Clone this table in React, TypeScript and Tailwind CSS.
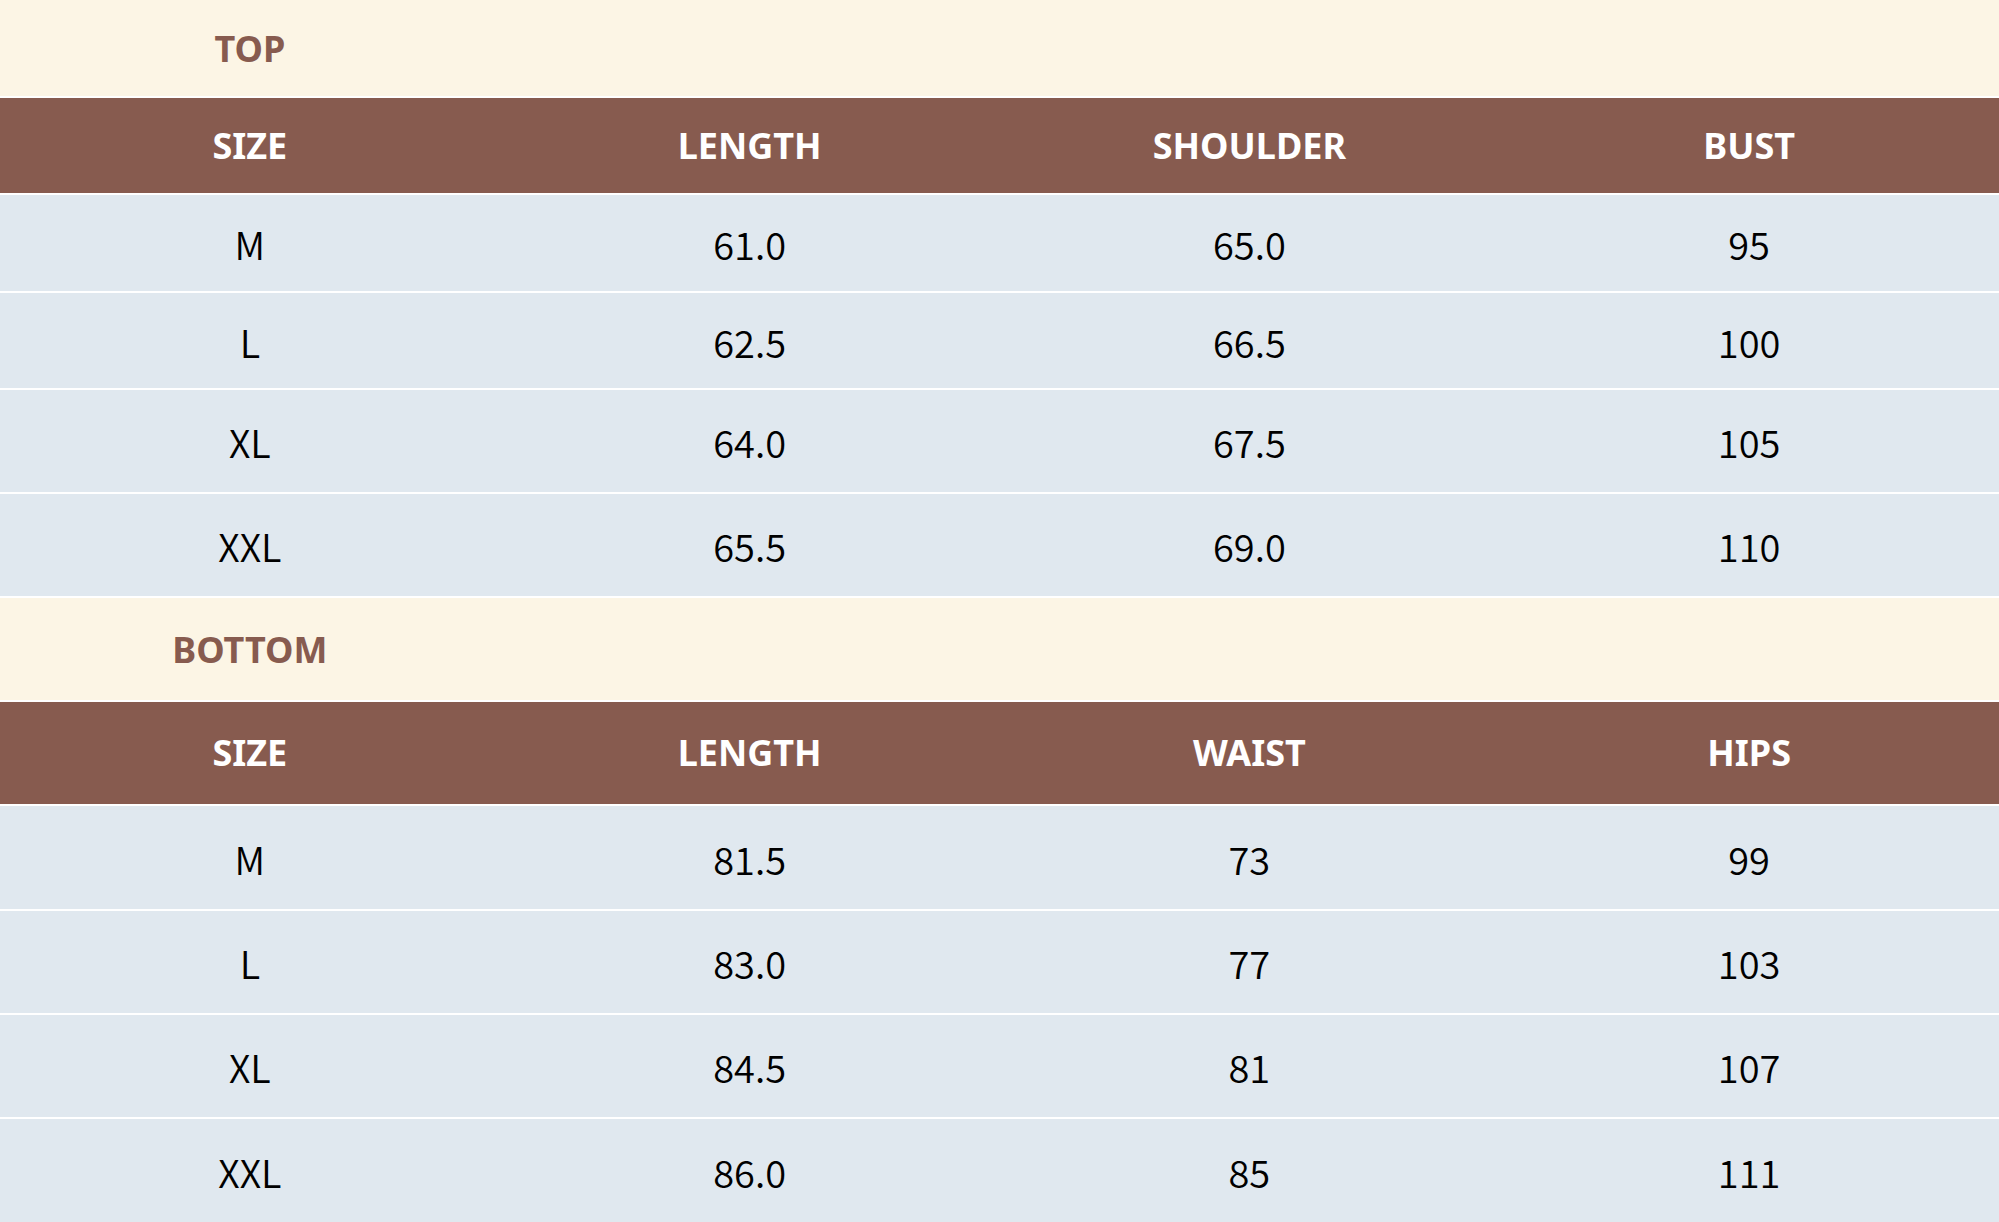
const TOP_ROWS = [
  { size: "M", a: "61.0", b: "65.0", c: "95", h: "h-[96px]" },
  { size: "L", a: "62.5", b: "66.5", c: "100", h: "h-[95px]" },
  { size: "XL", a: "64.0", b: "67.5", c: "105", h: "h-[102px]" },
  { size: "XXL", a: "65.5", b: "69.0", c: "110", h: "h-[102px]" },
];

const BOTTOM_ROWS = [
  { size: "M", a: "81.5", b: "73", c: "99", h: "h-[103px]" },
  { size: "L", a: "83.0", b: "77", c: "103", h: "h-[102px]" },
  { size: "XL", a: "84.5", b: "81", c: "107", h: "h-[102px]" },
  { size: "XXL", a: "86.0", b: "85", c: "111", h: "h-[103px]" },
];

type Row = { size: string; a: string; b: string; c: string; h: string };

function Section({
  title,
  titleH,
  headH,
  cols,
  rows,
}: {
  title: string;
  titleH: string;
  headH: string;
  cols: string[];
  rows: Row[];
}) {
  return (
    <>
      <div className={`grid grid-cols-4 bg-[#fcf5e5] ${titleH}`}>
        <div className="flex items-center justify-center pt-[2px] font-['Noto_Sans',sans-serif] text-[36px] font-bold text-[#875b4f]">
          {title}
        </div>
      </div>
      <div className={`grid grid-cols-4 bg-[#875b4f] ${headH}`}>
        {cols.map((c) => (
          <div
            key={c}
            className="flex items-center justify-center font-['Noto_Sans',sans-serif] text-[36px] font-bold text-white"
          >
            {c}
          </div>
        ))}
      </div>
      {rows.map((r) => (
        <div key={r.size} className={`grid grid-cols-4 bg-[#e0e8ef] ${r.h}`}>
          {[r.size, r.a, r.b, r.c].map((v, i) => (
            <div
              key={i}
              className="flex items-center justify-center pt-[1px] font-['Noto_Sans_CJK_SC',sans-serif] text-[38px] font-[350] text-black"
            >
              {v}
            </div>
          ))}
        </div>
      ))}
    </>
  );
}

export default function App() {
  return (
    <div className="flex h-[1222px] w-[1999px] flex-col gap-[2px] overflow-hidden bg-white">
      <Section
        title="TOP"
        titleH="h-[96px]"
        headH="h-[95px]"
        cols={["SIZE", "LENGTH", "SHOULDER", "BUST"]}
        rows={TOP_ROWS}
      />
      <Section
        title="BOTTOM"
        titleH="h-[102px]"
        headH="h-[102px]"
        cols={["SIZE", "LENGTH", "WAIST", "HIPS"]}
        rows={BOTTOM_ROWS}
      />
    </div>
  );
}
